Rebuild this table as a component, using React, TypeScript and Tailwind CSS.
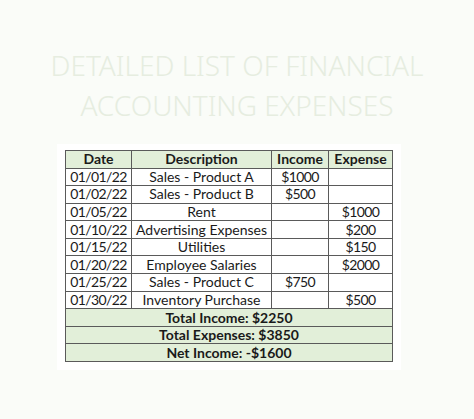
import React from 'react';

const rows = [
  { date: '01/01/22', desc: 'Sales - Product A', income: '$1000', expense: '' },
  { date: '01/02/22', desc: 'Sales - Product B', income: '$500', expense: '' },
  { date: '01/05/22', desc: 'Rent', income: '', expense: '$1000' },
  { date: '01/10/22', desc: 'Advertising Expenses', income: '', expense: '$200' },
  { date: '01/15/22', desc: 'Utilities', income: '', expense: '$150' },
  { date: '01/20/22', desc: 'Employee Salaries', income: '', expense: '$2000' },
  { date: '01/25/22', desc: 'Sales - Product C', income: '$750', expense: '' },
  { date: '01/30/22', desc: 'Inventory Purchase', income: '', expense: '$500' },
];

const totals = ['Total Income: $2250', 'Total Expenses: $3850', 'Net Income: -$1600'];

export default function App() {
  return (
    <div
      className="w-[474px] h-[419px] bg-[#fafcf8] overflow-hidden flex flex-col items-center"
      style={{ fontFamily: '"Lato", "Noto Sans", sans-serif' }}
    >
      {/* faded title */}
      <div
        className="pt-[45px] text-center text-[28px] leading-[40px] font-light text-[#e6ede0]"
        style={{ fontFamily: '"Noto Sans", sans-serif' }}
      >
        <div>DETAILED LIST OF FINANCIAL</div>
        <div>ACCOUNTING EXPENSES</div>
      </div>

      <div className="mt-[19px] ml-[-16px] bg-white px-[8px] pt-[6px] pb-[8px]">
        <table className="table-fixed w-[327px] border-collapse border border-[#5a5a5a] text-[14px] text-[#1a1a1a] leading-none">
          <thead>
            <tr className="h-[17.5px] bg-[#e2efd9]">
              <th className="w-[66px] border border-[#5a5a5a] font-bold">Date</th>
              <th className="w-[140px] border border-[#5a5a5a] font-bold">Description</th>
              <th className="w-[57px] border border-[#5a5a5a] font-bold">Income</th>
              <th className="w-[64px] border border-[#5a5a5a] font-bold">Expense</th>
            </tr>
          </thead>
          <tbody>
            {rows.map((r) => (
              <tr key={r.date} className="h-[17.6px]">
                <td className="border border-[#5a5a5a] text-center tracking-[-0.6px]">{r.date}</td>
                <td className="border border-[#5a5a5a] text-center whitespace-nowrap">{r.desc}</td>
                <td className="border border-[#5a5a5a] text-center tracking-[-0.6px]">{r.income}</td>
                <td className="border border-[#5a5a5a] text-center tracking-[-0.6px]">{r.expense}</td>
              </tr>
            ))}
            {totals.map((t) => (
              <tr key={t} className="h-[17.6px] bg-[#e2efd9]">
                <td colSpan={4} className="border border-[#5a5a5a] text-center font-bold">
                  {t}
                </td>
              </tr>
            ))}
          </tbody>
        </table>
      </div>
    </div>
  );
}
